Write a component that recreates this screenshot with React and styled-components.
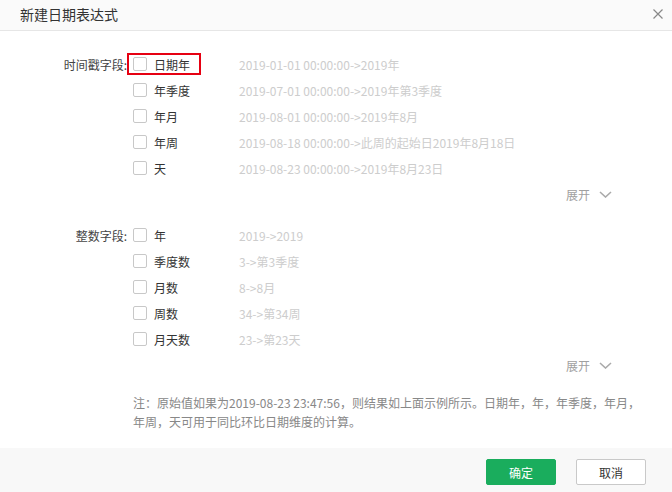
import styled, { createGlobalStyle } from "styled-components"

const Global = createGlobalStyle`
    html, body {
        margin: 0;
        padding: 0;
        background: #fff;
    }
    body {
        font-family: "Noto Sans CJK SC", "Liberation Sans", sans-serif;
        font-size: 12px;
        color: #333;
    }
`

const Dialog = styled.div`
    width: 672px;
    height: 492px;
    display: flex;
    flex-direction: column;
    background: #fff;
`
const Header = styled.div`
    height: 31px;
    flex-shrink: 0;
    display: flex;
    align-items: center;
    justify-content: space-between;
    padding: 0 9px 3px 20px;
    box-sizing: border-box;
    background: #fafafa;
    border-bottom: 1px solid #e6e6e6;
`
const Title = styled.span`
    font-size: 14px;
    color: #333;
`
const Close = styled.button`
    width: 10px;
    height: 10px;
    padding: 0;
    border: none;
    background: none;
    display: flex;
    cursor: pointer;
`
const Body = styled.div`
    flex: 1;
    padding-top: 20px;
`
const Section = styled.div`
    display: grid;
    grid-template-columns: 127px 112px 1fr;
    grid-auto-rows: 26px;
    align-items: center;
`
const FieldLabel = styled.div`
    grid-column: 1;
    text-align: right;
    color: #444;
`
const Option = styled.label`
    grid-column: 2;
    justify-self: start;
    display: inline-flex;
    align-items: center;
    gap: 7px;
    height: 22px;
    box-sizing: border-box;
    padding: 0 9px 0 4px;
    border: 2px solid ${p => (p.$marked ? "#e60012" : "transparent")};
    cursor: pointer;
`
const Box = styled.span`
    width: 14px;
    height: 14px;
    box-sizing: border-box;
    border: 1px solid #c8c8c8;
    border-radius: 2px;
    background: #fff;
`
const Example = styled.div`
    grid-column: 3;
    color: #cdcdcd;
    white-space: nowrap;
`
const Expand = styled.div`
    height: 26px;
    display: flex;
    align-items: center;
    justify-content: flex-end;
    gap: 9px;
    padding-right: 60px;
    color: #a0a0a0;
    cursor: pointer;
`
const Spacer = styled.div`
    height: ${p => p.$h}px;
`
const Note = styled.p`
    margin: 0;
    padding-left: 133px;
    line-height: 19px;
    color: #888;
    white-space: nowrap;
`
const Footer = styled.div`
    height: 44px;
    flex-shrink: 0;
    display: flex;
    justify-content: flex-end;
    align-items: flex-start;
    gap: 20px;
    padding: 11px 26px 0 0;
    box-sizing: border-box;
    background: #f8f8f8;
`
const Button = styled.button`
    width: 70px;
    height: 26px;
    font-family: inherit;
    font-size: 12px;
    border-radius: 2px;
    cursor: pointer;
    border: 1px solid ${p => (p.$primary ? "#1aad5d" : "#c9c9c9")};
    background: ${p => (p.$primary ? "#1aad5d" : "#fff")};
    color: ${p => (p.$primary ? "#fff" : "#333")};
`

const Chevron = () => (
    <svg width="13" height="7" viewBox="0 0 13 7">
        <path d="M1 1 L6.5 6 L12 1" fill="none" stroke="#aaa" strokeWidth="1.6" />
    </svg>
)

const timeRows = [
    ["日期年", "2019-01-01 00:00:00->2019年"],
    ["年季度", "2019-07-01 00:00:00->2019年第3季度"],
    ["年月", "2019-08-01 00:00:00->2019年8月"],
    ["年周", "2019-08-18 00:00:00->此周的起始日2019年8月18日"],
    ["天", "2019-08-23 00:00:00->2019年8月23日"],
]
const numRows = [
    ["年", "2019->2019"],
    ["季度数", "3->第3季度"],
    ["月数", "8->8月"],
    ["周数", "34->第34周"],
    ["月天数", "23->第23天"],
]

const Group = ({ label, rows, marked }) => (
    <Section>
        {rows.map(([name, ex], i) => [
            i === 0 ? <FieldLabel key={"l" + i}>{label}</FieldLabel> : null,
            <Option key={"o" + i} $marked={marked && i === 0}>
                <Box />
                {name}
            </Option>,
            <Example key={"e" + i}>{ex}</Example>,
        ])}
    </Section>
)

const App = () => {
    return (
        <Dialog>
            <Global />
            <Header>
                <Title>新建日期表达式</Title>
                <Close>
                    <svg width="10" height="10" viewBox="0 0 10 10">
                        <path d="M0.5 0.5 L9.5 9.5 M9.5 0.5 L0.5 9.5" stroke="#888" strokeWidth="1.2" />
                    </svg>
                </Close>
            </Header>
            <Body>
                <Group label="时间戳字段:" rows={timeRows} marked />
                <Expand>展开 <Chevron /></Expand>
                <Spacer $h={15} />
                <Group label="整数字段:" rows={numRows} />
                <Expand>展开 <Chevron /></Expand>
                <Spacer $h={15} />
                <Note>
                    注：原始值如果为2019-08-23 23:47:56，则结果如上面示例所示。日期年，年，年季度，年月，
                    <br />
                    年周，天可用于同比环比日期维度的计算。
                </Note>
            </Body>
            <Footer>
                <Button $primary>确定</Button>
                <Button>取消</Button>
            </Footer>
        </Dialog>
    )
}

export default App
